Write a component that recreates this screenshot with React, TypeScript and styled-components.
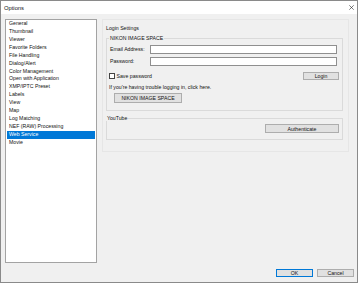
import styled, { createGlobalStyle } from "styled-components"

const GlobalStyle = createGlobalStyle`
  html, body {
    margin: 0;
    padding: 0;
    background: #ffffff;
  }
  body {
    font-family: "Liberation Sans", Arial, sans-serif;
    color: #111;
  }
`

// 창 전체
const Window = styled.div`
  width: 358px;
  height: 283px;
  box-sizing: border-box;
  border: 1px solid #8a8a8a;
  background: #f0f0f0;
  display: flex;
  flex-direction: column;
`
const TitleBar = styled.div`
  height: 13px;
  background: #ffffff;
  display: flex;
  align-items: center;
  justify-content: space-between;
  padding: 0 3px;
  font-size: 5.8px;
`
const Main = styled.div`
  height: 249px;
  box-sizing: border-box;
  display: flex;
  align-items: flex-start;
  padding: 5px 0 0 4px;
`

// 왼쪽 목록
const List = styled.div`
  width: 92px;
  height: 244px;
  box-sizing: border-box;
  border: 1px solid #a3a3a3;
  background: #ffffff;
  padding: 0 1px;
  font-size: 5.2px;
`
const ListItem = styled.div<{ $selected?: boolean }>`
  height: 7.93px;
  line-height: 7.93px;
  padding-left: 2px;
  white-space: nowrap;
  background: ${(p) => (p.$selected ? "#0078d7" : "transparent")};
  color: ${(p) => (p.$selected ? "#ffffff" : "#111")};
`

// 오른쪽 패널
const Panel = styled.div`
  margin-left: 5px;
  width: 247px;
  height: 133px;
  box-sizing: border-box;
  border: 1px solid #e6e6e6;
  padding: 4px 5px 0 3px;
  font-size: 5.2px;
`
const Heading = styled.div`
  height: 8px;
  line-height: 8px;
`
type GroupProps = { $gap: number; $pad: [number, number, number, number] }
const Group = styled.fieldset<GroupProps>`
  margin: ${(p) => p.$gap}px 0 0 0;
  padding: ${(p) => p.$pad.map((v) => `${v}px`).join(" ")};
  border: 1px solid #dadada;
  min-width: 0;
`
const Legend = styled.legend<{ $shift: number }>`
  padding: 0 1px;
  margin-left: ${(p) => p.$shift}px;
  line-height: 6px;
  font-size: 5.2px;
`
const FieldRow = styled.div<{ $top: number }>`
  display: flex;
  align-items: center;
  margin-top: ${(p) => p.$top}px;
`
const FieldLabel = styled.span`
  width: 40px;
`
const TextInput = styled.div`
  width: 187px;
  height: 8.5px;
  box-sizing: border-box;
  border: 1px solid #8f8f8f;
  background: #ffffff;
`
const CheckRow = styled.div`
  display: flex;
  align-items: center;
  justify-content: space-between;
  margin-top: 6.5px;
  margin-right: -2px;
`
const CheckLabel = styled.label`
  display: flex;
  align-items: center;
  gap: 1.5px;
  margin-left: -1px;
`
const Box = styled.span`
  width: 6px;
  height: 6px;
  box-sizing: border-box;
  border: 1px solid #444;
  background: #ffffff;
`
const Note = styled.div`
  margin-top: 4px;
  margin-left: -1px;
  line-height: 7px;
`
const Button = styled.div<{ $w: number; $h: number; $primary?: boolean }>`
  width: ${(p) => p.$w}px;
  height: ${(p) => p.$h}px;
  box-sizing: border-box;
  border: 1px solid ${(p) => (p.$primary ? "#0078d7" : "#adadad")};
  background: #e1e1e1;
  display: flex;
  align-items: center;
  justify-content: center;
  font-size: 5.2px;
  white-space: nowrap;
`
const LinkButtonRow = styled.div`
  margin-top: 2px;
  margin-left: 4px;
`
const RightRow = styled.div`
  display: flex;
  justify-content: flex-end;
`

// 하단 버튼
const Footer = styled.div`
  height: 19px;
  box-sizing: border-box;
  display: flex;
  justify-content: flex-end;
  gap: 4px;
  padding: 6px 3px 5px 0;
`

const pages = [
  "General",
  "Thumbnail",
  "Viewer",
  "Favorite Folders",
  "File Handling",
  "Dialog/Alert",
  "Color Management",
  "Open with Application",
  "XMP/IPTC Preset",
  "Labels",
  "View",
  "Map",
  "Log Matching",
  "NEF (RAW) Processing",
  "Web Service",
  "Movie",
]

const CloseIcon = () => (
  <svg width="5" height="5" viewBox="0 0 5 5">
    <path d="M0.3 0.3 L4.7 4.7 M4.7 0.3 L0.3 4.7" stroke="#222" strokeWidth="0.6" />
  </svg>
)

const App = () => {
  return (
    <>
      <GlobalStyle />
      <Window>
        <TitleBar>
          <span>Options</span>
          <CloseIcon />
        </TitleBar>
        <Main>
          <List>
            {pages.map((name) => (
              <ListItem key={name} $selected={name === "Web Service"}>
                {name}
              </ListItem>
            ))}
          </List>
          <Panel>
            <Heading>Login Settings</Heading>
            <Group $gap={3} $pad={[4, 5, 7, 3]}>
              <Legend $shift={-1}>NIKON IMAGE SPACE</Legend>
              <FieldRow $top={0}>
                <FieldLabel>Email Address:</FieldLabel>
                <TextInput />
              </FieldRow>
              <FieldRow $top={3.5}>
                <FieldLabel>Password:</FieldLabel>
                <TextInput />
              </FieldRow>
              <CheckRow>
                <CheckLabel>
                  <Box />
                  Save password
                </CheckLabel>
                <Button $w={36} $h={8}>Login</Button>
              </CheckRow>
              <Note>If you're having trouble logging in, click here.</Note>
              <LinkButtonRow>
                <Button $w={68} $h={10}>NIKON IMAGE SPACE</Button>
              </LinkButtonRow>
            </Group>
            <Group $gap={4} $pad={[3, 3, 6, 3]}>
              <Legend $shift={-4}>YouTube</Legend>
              <RightRow>
                <Button $w={74} $h={9}>Authenticate</Button>
              </RightRow>
            </Group>
          </Panel>
        </Main>
        <Footer>
          <Button $w={37} $h={8} $primary>OK</Button>
          <Button $w={37} $h={8}>Cancel</Button>
        </Footer>
      </Window>
    </>
  )
}

export default App
